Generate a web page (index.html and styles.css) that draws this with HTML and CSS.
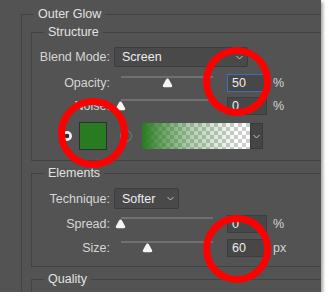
FILE: index.html
```html
<!DOCTYPE html>
<html lang="en">
<head>
    <meta charset="UTF-8">
    <title>Outer Glow</title>
    <link rel="stylesheet" href="styles.css">
</head>
<body>
    <div class="panel">
        <fieldset class="group group-outer">
            <legend>Outer Glow</legend>

            <fieldset class="group group-inner structure">
                <legend>Structure</legend>

                <div class="row loose">
                    <span class="label">Blend Mode:</span>
                    <div class="select select-blend">
                        <span>Screen</span>
                        <svg class="chevron" width="7" height="5" viewBox="0 0 7 5"><path d="M.5 1 3.5 4 6.5 1" /></svg>
                    </div>
                </div>

                <div class="row loose">
                    <span class="label">Opacity:</span>
                    <div class="slider">
                        <div class="track"></div>
                        <svg class="thumb" style="margin-left:48px" width="11" height="10" viewBox="0 0 11 10"><path d="M5.5.6Q6.4.6 7.1 1.8L10 7Q10.8 9.2 8.6 9.2H2.4Q.2 9.2 1 7L3.9 1.8Q4.6.6 5.5.6Z" /></svg>
                    </div>
                    <div class="field active">50</div>
                    <span class="unit">%</span>
                </div>

                <div class="row tight">
                    <span class="label">Noise:</span>
                    <div class="slider">
                        <div class="track"></div>
                        <svg class="thumb" style="margin-left:1px" width="11" height="10" viewBox="0 0 11 10"><path d="M5.5.6Q6.4.6 7.1 1.8L10 7Q10.8 9.2 8.6 9.2H2.4Q.2 9.2 1 7L3.9 1.8Q4.6.6 5.5.6Z" /></svg>
                    </div>
                    <div class="field">0</div>
                    <span class="unit">%</span>
                </div>

                <div class="row loose color-row">
                    <span class="radio on"></span>
                    <span class="swatch"></span>
                    <span class="radio off"></span>
                    <div class="gradient">
                        <div class="gradient-fill"></div>
                        <div class="gradient-btn">
                            <svg class="chevron" width="7" height="5" viewBox="0 0 7 5"><path d="M.5 1 3.5 4 6.5 1" /></svg>
                        </div>
                    </div>
                </div>
            </fieldset>

            <fieldset class="group group-inner elements">
                <legend>Elements</legend>

                <div class="row loose">
                    <span class="label">Technique:</span>
                    <div class="select select-technique">
                        <span>Softer</span>
                        <svg class="chevron" width="7" height="5" viewBox="0 0 7 5"><path d="M.5 1 3.5 4 6.5 1" /></svg>
                    </div>
                </div>

                <div class="row">
                    <span class="label">Spread:</span>
                    <div class="slider">
                        <div class="track"></div>
                        <svg class="thumb" style="margin-left:1px" width="11" height="10" viewBox="0 0 11 10"><path d="M5.5.6Q6.4.6 7.1 1.8L10 7Q10.8 9.2 8.6 9.2H2.4Q.2 9.2 1 7L3.9 1.8Q4.6.6 5.5.6Z" /></svg>
                    </div>
                    <div class="field">0</div>
                    <span class="unit">%</span>
                </div>

                <div class="row">
                    <span class="label">Size:</span>
                    <div class="slider">
                        <div class="track"></div>
                        <svg class="thumb" style="margin-left:28px" width="11" height="10" viewBox="0 0 11 10"><path d="M5.5.6Q6.4.6 7.1 1.8L10 7Q10.8 9.2 8.6 9.2H2.4Q.2 9.2 1 7L3.9 1.8Q4.6.6 5.5.6Z" /></svg>
                    </div>
                    <div class="field">60</div>
                    <span class="unit">px</span>
                </div>
            </fieldset>

            <fieldset class="group group-inner quality">
                <legend>Quality</legend>
            </fieldset>
        </fieldset>

        <!-- red highlight rings -->
        <div class="mark mark-opacity"></div>
        <div class="mark mark-color"></div>
        <div class="mark mark-size"></div>
    </div>
</body>
</html>
```

FILE: styles.css
```css
body {
    margin: 0;
    background-color: #fff;
    font-family: "Liberation Sans", Arial, sans-serif;
    font-size: 12.5px;
    color: #d6d6d6;
}
.panel {
    position: relative;
    width: 321px;
    height: 292px;
    box-sizing: border-box;
    padding: 7px 0 0 21px;
    background-color: #535353;
    overflow: hidden;
    box-shadow: 2px 2px 3px rgba(70, 80, 60, 0.5);
}
.group {
    margin: 0;
    padding: 0;
    min-width: 0;
    border: 1px solid #434343;
}
.group legend {
    margin-left: 12px;
    padding: 0 4px;
    line-height: 15px;
    color: #e2e2e2;
}
.group-outer {
    width: 330px;
    height: 320px;
}
.group-inner {
    margin: 5px 0 0 9px;
}
.structure {
    margin-top: 3px;
    padding-bottom: 10px;
}
.elements {
    padding-bottom: 9px;
}
.quality {
    height: 40px;
}
.row {
    display: flex;
    align-items: center;
    margin-top: 6px;
}
.row.loose {
    margin-top: 7px;
}
.row.tight {
    margin-top: 5px;
}
.label {
    flex: none;
    width: 78px;
    margin-right: 4px;
    text-align: right;
}
.select {
    display: flex;
    align-items: center;
    justify-content: space-between;
    box-sizing: border-box;
    padding: 0 4px 0 7px;
    border: 1px solid #3c3c3c;
    border-radius: 2px;
    background-color: #494949;
    color: #ececec;
}
.select-blend {
    width: 134px;
    height: 20px;
}
.select-technique {
    width: 65px;
    height: 21px;
}
.chevron path {
    fill: none;
    stroke: #c4c4c4;
    stroke-width: 1;
}
.slider {
    flex: none;
    width: 113px;
    height: 18px;
}
.track {
    width: 92px;
    height: 2px;
    margin: 2px 0 0 7px;
    background-color: #707070;
}
.thumb {
    display: block;
}
.thumb path {
    fill: #f4f4f4;
}
.field {
    box-sizing: border-box;
    width: 40px;
    height: 18px;
    padding-left: 4px;
    border: 1px solid #3d3d3d;
    background-color: #474747;
    line-height: 16px;
    color: #ececec;
}
.field.active {
    border-color: #3c6dbe;
}
.unit {
    margin-left: 6px;
}
.color-row {
    height: 28px;
}
.radio {
    flex: none;
    box-sizing: border-box;
    border-radius: 50%;
}
.radio.on {
    width: 10px;
    height: 10px;
    margin-left: 30px;
    background: radial-gradient(circle, #2e2e2e 0 2px, #f0f0f0 2.6px);
}
.radio.off {
    width: 12px;
    height: 12px;
    margin-left: 13px;
    border: 1px solid #7a7a7a;
}
.swatch {
    flex: none;
    box-sizing: border-box;
    width: 28px;
    height: 28px;
    margin-left: 7px;
    border: 1px solid #2f2f2f;
    background-color: #287b20;
}
.gradient {
    display: flex;
    height: 26px;
    margin-left: 10px;
}
.gradient-fill {
    width: 108px;
    background:
        linear-gradient(to right, #287b20 0, rgba(40, 123, 32, 0.75) 15%, rgba(40, 123, 32, 0.35) 45%, rgba(40, 123, 32, 0) 90%),
        conic-gradient(#ffffff 0 25%, #cdcdcd 0 50%, #ffffff 0 75%, #cdcdcd 0) 0 0 / 8px 8px;
}
.gradient-btn {
    display: flex;
    align-items: center;
    justify-content: center;
    box-sizing: border-box;
    width: 13px;
    border: 1px solid #3a3a3a;
    background-color: #454545;
}
.mark {
    position: absolute;
    box-sizing: border-box;
    border: 7px solid #ff0000;
    border-radius: 50%;
}
.mark-opacity {
    left: 203px;
    top: 47px;
    width: 68px;
    height: 69px;
}
.mark-color {
    left: 58px;
    top: 98px;
    width: 70px;
    height: 70px;
}
.mark-size {
    left: 203px;
    top: 215px;
    width: 68px;
    height: 68px;
}
```
